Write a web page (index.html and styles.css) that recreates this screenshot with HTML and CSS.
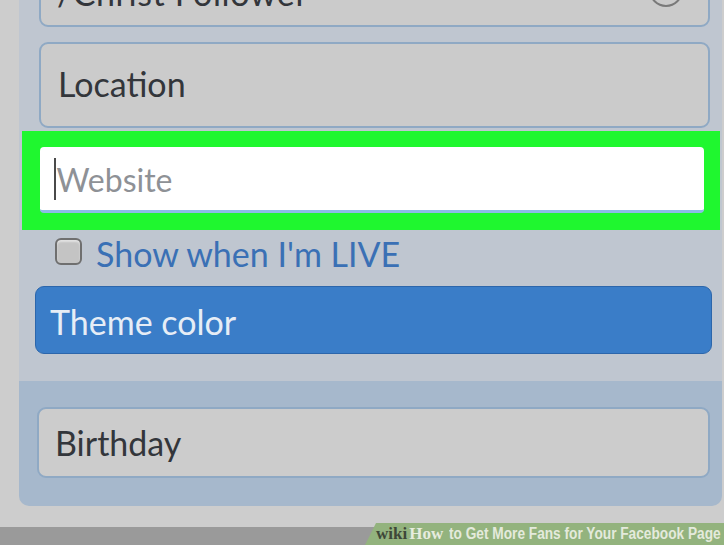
FILE: index.html
```html
<!DOCTYPE html>
<html>
<head>
<meta charset="utf-8">
<link rel="stylesheet" href="styles.css">
</head>
<body>
<div class="page">
  <div class="panel">
    <div class="upper">
      <div class="field field-top">
        <span class="field-text">/Christ Follower</span>
        <span class="ring"></span>
      </div>
      <div class="field field-location"><span class="field-text">Location</span></div>
      <div class="highlight">
        <div class="input"><span class="caret"></span><span class="placeholder">Website</span></div>
      </div>
      <label class="check-row"><span class="checkbox"></span><span class="check-label">Show when I'm LIVE</span></label>
      <div class="theme-btn">Theme color</div>
    </div>
    <div class="lower">
      <div class="field field-birthday"><span class="field-text">Birthday</span></div>
    </div>
  </div>
</div>
<div class="footer">
  <div class="footer-bar"></div>
  <div class="banner"><span class="wiki">wiki</span><span class="how">How</span><span class="title">to Get More Fans for Your Facebook Page</span></div>
</div>
</body>
</html>
```
FILE: styles.css
```css
html, body {
  margin: 0;
  padding: 0;
}
body {
  width: 724px;
  height: 545px;
  overflow: hidden;
  background: #cdcdcd;
  font-family: Lato, "Noto Sans", sans-serif;
}
.page {
  height: 523px;
  padding: 0 2px 0 19px;
  overflow: hidden;
}
.panel {
  border-radius: 0 0 10px 10px;
  overflow: hidden;
}
.upper {
  background: #bfc6d0;
  padding: 0 12px 27px 20px;
  display: flex;
  flex-direction: column;
}
.field {
  box-sizing: border-box;
  background: #cbcbcb;
  border: 2px solid #8fa9c4;
  border-radius: 9px;
  display: flex;
  align-items: center;
  color: #33363b;
  font-size: 34px;
}
.field-top {
  margin-top: -33px;
  height: 60px;
  padding: 0 25px 0 16px;
  justify-content: space-between;
  align-items: flex-start;
}
.field-top .field-text {
  margin-top: 3px;
  letter-spacing: 0.6px;
}
.ring {
  width: 30px;
  height: 30px;
  border: 2.5px solid #7a7a7a;
  border-radius: 50%;
  margin-top: 4px;
}
.field-location {
  margin-top: 15px;
  height: 86px;
  padding-left: 17px;
  padding-bottom: 4px;
}
.highlight {
  margin: 3px -10px 0 -17px;
  background: #1ff72f;
  padding: 16px 16px 17px 18px;
}
.input {
  box-sizing: border-box;
  height: 66px;
  background: #ffffff;
  border-radius: 4px;
  border-bottom: 3px solid #8dbbe8;
  display: flex;
  align-items: center;
  padding-left: 14px;
}
.caret {
  width: 1.5px;
  height: 42px;
  background: #4a4a4a;
  margin-right: 1px;
}
.placeholder {
  color: #8e9196;
  font-size: 32px;
  margin-top: 2px;
}
.check-row {
  display: flex;
  align-items: center;
  margin: 5px 0 0 16px;
  height: 40px;
}
.checkbox {
  box-sizing: border-box;
  width: 27px;
  height: 27px;
  border: 2px solid #6f6f6f;
  border-radius: 6px;
  background: #c4c4c4;
  box-shadow: inset 0 2px 2px rgba(255,255,255,0.5);
  margin-top: -7px;
}
.check-label {
  margin-left: 14px;
  color: #3a70b5;
  font-size: 34px;
  margin-top: -3px;
}
.theme-btn {
  box-sizing: border-box;
  margin: 11px -2px 0 -4px;
  height: 68px;
  background: #3a7dc8;
  border: 1.5px solid #2c66ab;
  border-radius: 9px;
  color: #e6edf6;
  font-size: 34px;
  display: flex;
  align-items: center;
  padding-left: 14px;
  padding-top: 2px;
}
.lower {
  background: #a6b8cc;
  padding: 26px 12px 28px 18px;
}
.field-birthday {
  height: 71px;
  padding-left: 16px;
  background: #cccccc;
}
.footer {
  height: 22px;
  display: flex;
  align-items: flex-end;
}
.footer-bar {
  flex: 1;
  height: 18px;
  background: #9a9a9a;
  margin-right: -12px;
}
.banner {
  height: 22px;
  width: 348px;
  padding-left: 11px;
  background: #93b37e;
  clip-path: polygon(11px 0, 100% 0, 100% 100%, 0 100%);
  display: flex;
  align-items: center;
  white-space: nowrap;
  color: #e4eadc;
  overflow: hidden;
}
.wiki {
  font-family: "Liberation Serif", serif;
  font-weight: bold;
  color: #3e4838;
  font-size: 17px;
}
.how {
  font-family: "Liberation Serif", serif;
  font-weight: bold;
  color: #e6ecdf;
  font-size: 17px;
  margin-left: 2px;
}
.title {
  display: inline-block;
  font-family: "Liberation Sans", sans-serif;
  font-weight: bold;
  font-size: 16px;
  margin-left: 6px;
  transform: scaleX(0.855);
  transform-origin: left center;
}
```
